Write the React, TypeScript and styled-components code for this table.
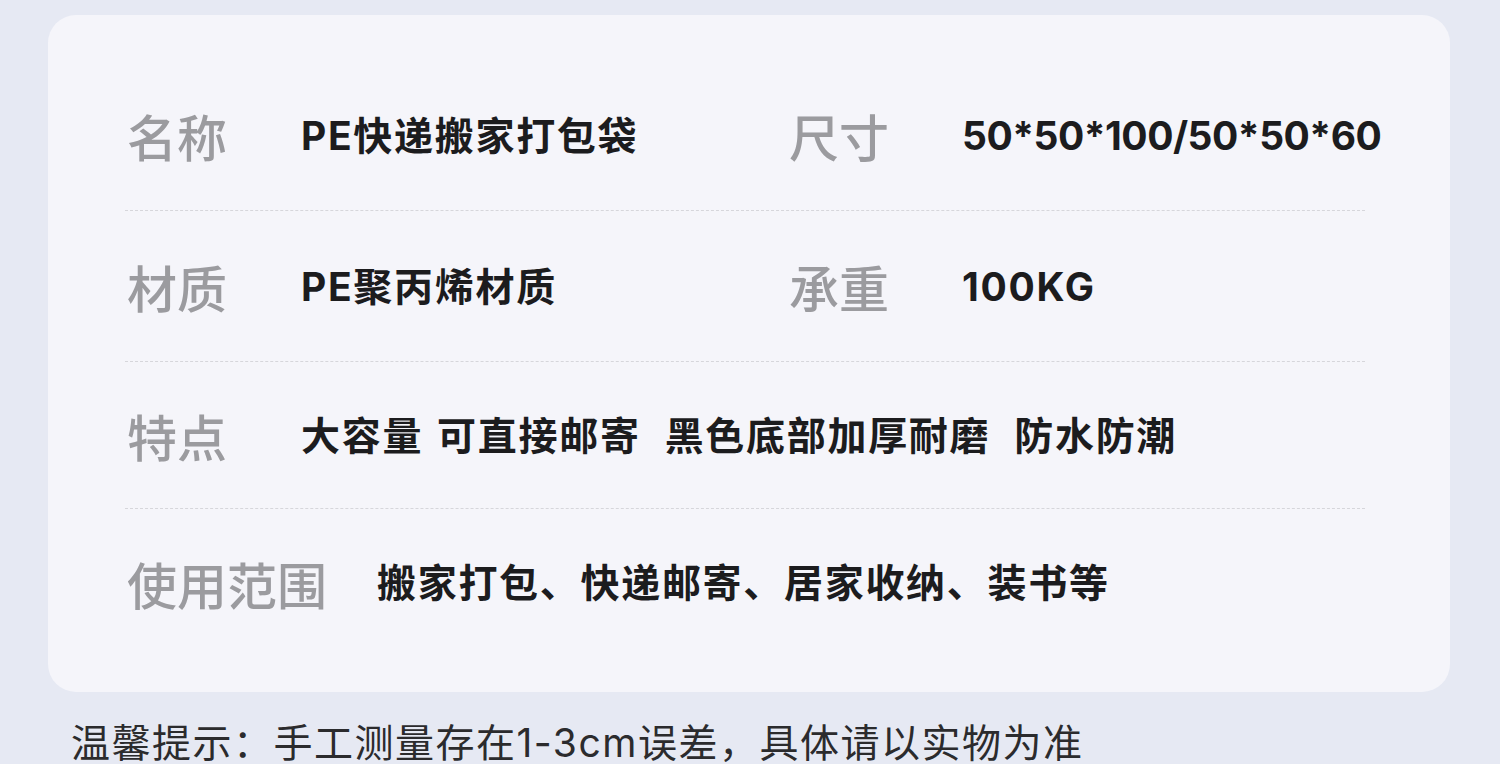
import React from 'react';
import styled, { createGlobalStyle } from 'styled-components';

const GlobalStyle = createGlobalStyle`
    html, body {
        margin: 0;
        padding: 0;
        background: #e6e9f3;
    }
    body {
        font-family: Inter, 'Noto Sans CJK SC', sans-serif;
        overflow: hidden;
    }
`;

const Page = styled.div`
    width: 1500px;
    height: 764px;
    padding-top: 15px;
    box-sizing: border-box;
`;

const Card = styled.div`
    margin-left: 48px;
    width: 1402px;
    box-sizing: border-box;
    background: #f5f5fa;
    border-radius: 28px;
    padding: 45px 85px 36px 77px;
`;

const Row = styled.div<{ h: number; last?: boolean }>`
    display: flex;
    align-items: center;
    height: ${(p) => p.h}px;
    box-sizing: border-box;
    border-bottom: ${(p) => (p.last ? 'none' : '1px dashed #d6d6db')};
    padding-left: 2px;
`;

const Field = styled.div<{ w?: number }>`
    display: flex;
    align-items: center;
    width: ${(p) => (p.w ? `${p.w}px` : 'auto')};
    flex-shrink: 0;
`;

const Label = styled.div<{ w: number }>`
    width: ${(p) => p.w}px;
    flex-shrink: 0;
    font-family: 'Noto Sans CJK SC', sans-serif;
    font-size: 50px;
    font-weight: 500;
    color: #9b9b9f;
    line-height: 1;
`;

const Value = styled.div<{ num?: boolean }>`
    font-family: Inter, 'Noto Sans CJK SC', sans-serif;
    font-size: 39px;
    font-weight: 700;
    letter-spacing: ${(p) => (p.num ? '-0.5px' : '1.7px')};
    color: #1c1c1e;
    line-height: 1;
    white-space: nowrap;
`;

const Tags = styled.div`
    display: flex;
    align-items: center;
    gap: 24px;
`;

const Tag = styled(Value)<{ tight?: boolean }>`
    margin-right: ${(p) => (p.tight ? '-10px' : '0')};
`;

const Note = styled.div`
    padding-left: 71px;
    margin-top: 26px;
    font-family: Inter, 'Noto Sans CJK SC', sans-serif;
    font-size: 39px;
    letter-spacing: 1.5px;
    color: #2b2b2d;
    line-height: 1.3;
    white-space: nowrap;
`;

const App: React.FC = () => (
    <Page>
        <GlobalStyle />
        <Card>
            <Row h={151}>
                <Field w={662}>
                    <Label w={174}>名称</Label>
                    <Value>PE快递搬家打包袋</Value>
                </Field>
                <Field>
                    <Label w={173}>尺寸</Label>
                    <Value num>50*50*100/50*50*60</Value>
                </Field>
            </Row>
            <Row h={151}>
                <Field w={662}>
                    <Label w={174}>材质</Label>
                    <Value>PE聚丙烯材质</Value>
                </Field>
                <Field>
                    <Label w={173}>承重</Label>
                    <Value>100KG</Value>
                </Field>
            </Row>
            <Row h={147}>
                <Field>
                    <Label w={174}>特点</Label>
                    <Tags>
                        <Tag tight>大容量</Tag>
                        <Tag>可直接邮寄</Tag>
                        <Tag>黑色底部加厚耐磨</Tag>
                        <Tag>防水防潮</Tag>
                    </Tags>
                </Field>
            </Row>
            <Row h={147} last>
                <Field>
                    <Label w={250}>使用范围</Label>
                    <Value>搬家打包、快递邮寄、居家收纳、装书等</Value>
                </Field>
            </Row>
        </Card>
        <Note>温馨提示：手工测量存在1-3cm误差，具体请以实物为准</Note>
    </Page>
);

export default App;
